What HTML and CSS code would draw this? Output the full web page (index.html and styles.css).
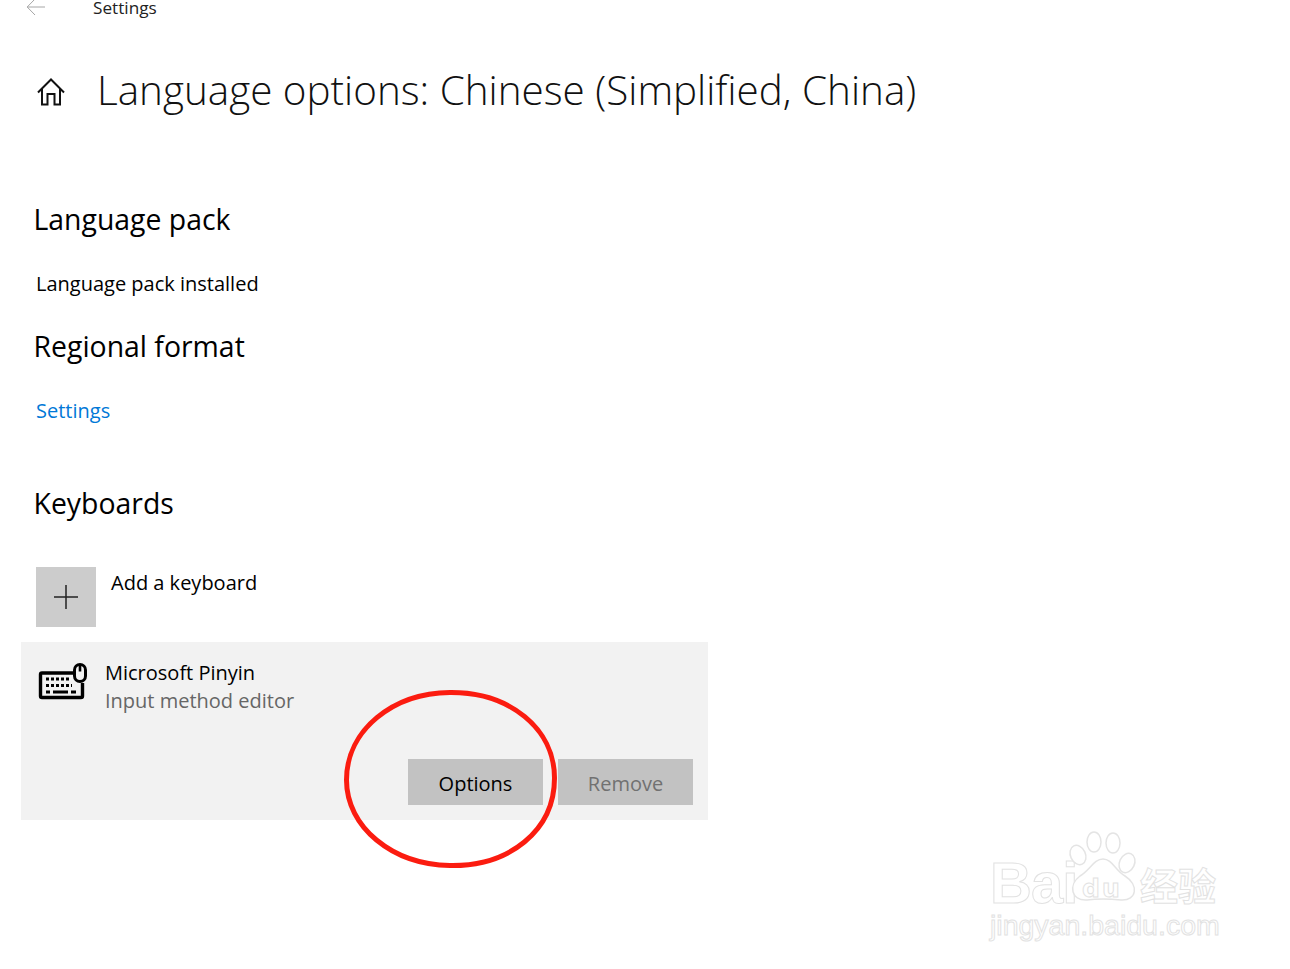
FILE: index.html
```html
<!DOCTYPE html>
<html lang="en">

<head>
    <meta charset="utf-8">
    <title>Settings</title>
    <link rel="stylesheet" href="styles.css">
</head>

<body>
    <header class="topbar">
        <svg class="back" width="20" height="16" viewBox="0 0 20 16">
            <path d="M9 -1 L1.2 7 L9 15 M1.2 7 H19" fill="none" stroke="#a6a6a6" stroke-width="1" />
        </svg>
        <span class="apptitle">Settings</span>
    </header>

    <div class="titlerow">
        <svg class="home" width="28" height="28" viewBox="0 0 28 28">
            <path d="M1 14.5 L14 1.5 L27 14.5 M5 11 V26.5 H10.5 V16 H17.5 V26.5 H23 V11" fill="none" stroke="#111" stroke-width="2" />
        </svg>
        <h1>Language options: Chinese (Simplified, China)</h1>
    </div>

    <main class="content">
        <h2 class="first">Language pack</h2>
        <p class="line">Language pack installed</p>

        <h2 class="regional">Regional format</h2>
        <p class="line"><a href="#">Settings</a></p>

        <h2 class="keyboards">Keyboards</h2>

        <div class="addrow">
            <div class="addbtn">
                <svg width="26" height="26" viewBox="0 0 26 26">
                    <path d="M13 1 V25 M1 13 H25" stroke="#222" stroke-width="1.5" fill="none" />
                </svg>
            </div>
            <span class="addlabel">Add a keyboard</span>
        </div>

        <section class="card">
            <div class="cardtop">
                <svg class="kbd" width="50" height="38" viewBox="0 0 50 38">
                    <path d="M35 11 H4 Q2.5 11 2.5 12.5 V34 Q2.5 35.5 4 35.5 H43 Q44.5 35.5 44.5 34 V21" fill="none" stroke="#000" stroke-width="3.4" />
                    <rect x="36.5" y="2.5" width="11" height="17" rx="5.5" fill="#f2f2f2" stroke="#000" stroke-width="3" />
                    <path d="M42 3 V9.5" stroke="#000" stroke-width="2.6" />
                    <path d="M8 17 H31 M8 23.5 H34" stroke="#000" stroke-width="3" stroke-dasharray="3 2" fill="none" />
                    <path d="M8 30 H12 M15 30 H30 M33 30 H38" stroke="#000" stroke-width="3" fill="none" />
                </svg>
                <div class="cardtext">
                    <div class="cardname">Microsoft Pinyin</div>
                    <div class="cardsub">Input method editor</div>
                </div>
            </div>
            <div class="cardbtns">
                <button class="btn">Options</button>
                <button class="btn off">Remove</button>
            </div>
        </section>
    </main>

    <!-- hand drawn red mark over the button -->
    <svg class="mark" width="216" height="182" viewBox="0 0 216 182">
        <path d="M107 3.5 C167 3 211.5 40 211.5 89 C211.5 142 166 177.5 107 176.5 C49 175.5 3.5 138 3.5 91 C3.5 41 50 4 107 3.5 Z" fill="none" stroke="#fb1c10" stroke-width="5" />
    </svg>

    <div class="watermark">
        <span class="bai">Bai</span>
        <svg class="paw" width="80" height="80" viewBox="0 0 80 80">
            <g fill="#fff" stroke="#e4e4e4" stroke-width="1.5">
                <ellipse cx="13" cy="25" rx="7.5" ry="10" transform="rotate(-25 13 25)" />
                <ellipse cx="29" cy="12" rx="7" ry="10" />
                <ellipse cx="48" cy="13" rx="7" ry="10" />
                <ellipse cx="62" cy="33" rx="7.5" ry="10" transform="rotate(25 62 33)" />
                <path d="M38 29 C47 29 50 40 60 46 C74 55 72 71 56 70 C46 69 30 69 22 70 C6 71 3 55 15 46 C25 40 29 29 38 29 Z" />
            </g>
        </svg>
        <span class="du">du</span>
        <span class="jy">经验</span>
        <span class="wmurl">jingyan.baidu.com</span>
    </div>
</body>

</html>
```
FILE: styles.css
```css
body {
    margin: 0;
    background: #fff;
    color: #000;
    font-family: "Open Sans", "Noto Sans", sans-serif;
    position: relative;
    height: 969px;
    overflow: hidden;
}

.topbar {
    display: flex;
    align-items: center;
    height: 16px;
    padding-left: 26px;
}

.back {
    margin-right: 47px;
}

.apptitle {
    font-size: 17.2px;
    line-height: 16px;
    color: #222;
}

.titlerow {
    display: flex;
    align-items: center;
    height: 60px;
    margin-top: 43px;
    padding-left: 37px;
}

.home {
    margin: 6px 32px 0 0;
}

h1 {
    margin: 0;
    padding-top: 2px;
    font-size: 40.4px;
    font-weight: 300;
    line-height: 60px;
    color: #111;
}

.content {
    padding-left: 21px;
}

h2 {
    margin: 0 0 0 12.5px;
    font-size: 28.4px;
    font-weight: 400;
    line-height: 40px;
}

.first {
    margin-top: 80px;
}

.line {
    margin: 0 0 0 15px;
    font-size: 20px;
    line-height: 28px;
    padding-top: 31px;
}

.line a {
    color: #0078d7;
    text-decoration: none;
}

.regional {
    margin-top: 28px;
}

.keyboards {
    margin-top: 58px;
}

.addrow {
    display: flex;
    margin: 44px 0 15px 15px;
}

.addbtn {
    display: flex;
    align-items: center;
    justify-content: center;
    width: 60px;
    height: 60px;
    background: #ccc;
}

.addlabel {
    margin-left: 15px;
    font-size: 20px;
    line-height: 32px;
}

.card {
    display: flex;
    flex-direction: column;
    justify-content: space-between;
    width: 687px;
    height: 178px;
    background: #f2f2f2;
    box-sizing: border-box;
    padding: 15px;
}

.cardtop {
    display: flex;
}

.kbd {
    margin: 5px 0 0 2px;
}

.cardtext {
    margin: 2px 0 0 17px;
    font-size: 20px;
    line-height: 28px;
}

.cardsub {
    color: #666;
}

.cardbtns {
    display: flex;
    justify-content: flex-end;
    gap: 15px;
}

.btn {
    width: 135px;
    height: 46px;
    border: 0;
    padding: 3px 0 0;
    background: #c2c2c2;
    color: #000;
    font-family: inherit;
    font-size: 20px;
}

.btn.off {
    color: #717171;
}

.mark {
    position: absolute;
    left: 343px;
    top: 689px;
}

.watermark {
    position: absolute;
    left: 988px;
    top: 830px;
    width: 240px;
    height: 115px;
    color: #fff;
    white-space: nowrap;
    -webkit-text-stroke: 1px #e2e2e2;
}

.paw {
    position: absolute;
    left: 77px;
    top: 0;
}

.bai {
    position: absolute;
    left: 2px;
    top: 22px;
    font-family: "Liberation Sans", sans-serif;
    font-weight: 700;
    font-size: 58px;
    line-height: 62px;
    letter-spacing: -1px;
}

.du {
    position: absolute;
    left: 94px;
    top: 44px;
    font-family: "DejaVu Sans", sans-serif;
    font-weight: 700;
    font-size: 25px;
    line-height: 30px;
    letter-spacing: 2px;
}

.jy {
    position: absolute;
    left: 152px;
    top: 30px;
    font-family: "Noto Sans CJK SC", sans-serif;
    font-weight: 700;
    font-size: 38px;
    line-height: 48px;
}

.wmurl {
    position: absolute;
    top: 78px;
    left: 2px;
    font-family: "Liberation Sans", sans-serif;
    font-size: 28.5px;
    line-height: 34px;
}
```
